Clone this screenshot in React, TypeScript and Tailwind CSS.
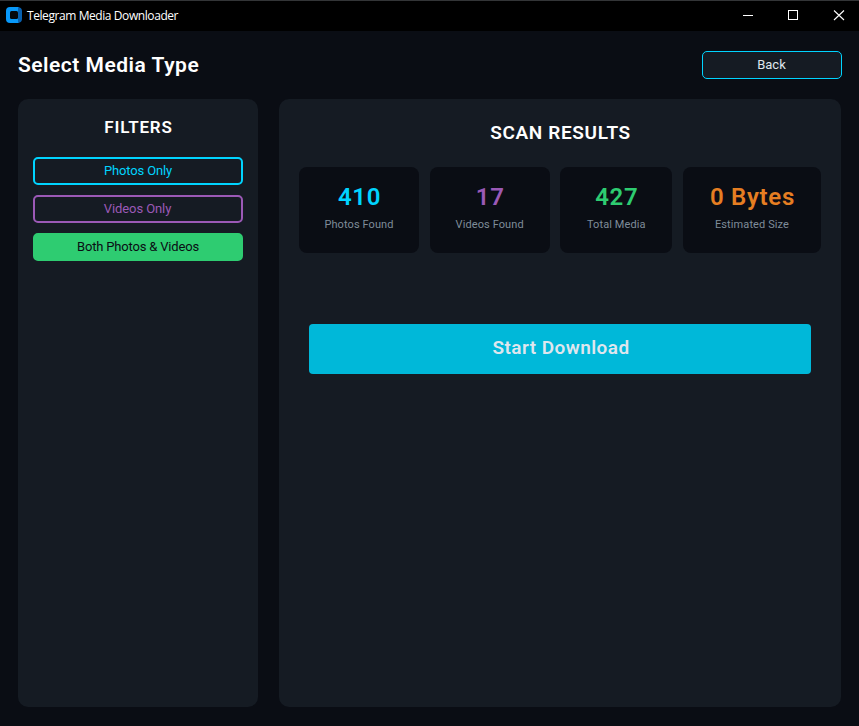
import type { ReactNode } from "react";

function TitleBar() {
  return (
    <header className="flex h-[31px] shrink-0 items-center border-t border-[#333537] bg-black pl-[6px] font-['Open_Sans',sans-serif]">
      <svg width="16" height="16" viewBox="0 0 16 16" className="mb-[2px] shrink-0">
        <path d="M4 0H13V16H4Q0 16 0 12V4Q0 0 4 0Z" fill="#0898f8" />
        <path d="M12 0Q16 0.5 16 4V12Q16 15.5 12 16V13L12 3Z" fill="#0861b0" />
        <rect x="4" y="4" width="8" height="8" rx="1.5" fill="#05080d" />
      </svg>
      <span className="ml-[5px] text-[12px] tracking-[-0.42px] text-white">Telegram Media Downloader</span>
      <svg width="120" height="30" viewBox="739 1 120 30" className="ml-auto" fill="none" stroke="#fff" shapeRendering="crispEdges">
        <path d="M743 15.5H753M788.500 10.500H797.500V19.500H788.500Z" />
        <path d="M834 10.500L844 20M844 10.500L834 20" shapeRendering="auto" strokeWidth="1.1" />
      </svg>
    </header>
  );
}

function FilterButton({ className, children }: { className: string; children: ReactNode }) {
  return (
    <button className={`flex h-7 w-full items-center justify-center rounded-[5px] border-2 pb-px text-[13px] leading-4 ${className}`}>
      {children}
    </button>
  );
}

function StatCard({ value, label, className, color }: { value: string; label: string; className: string; color: string }) {
  return (
    <div className={`flex h-[86px] flex-col items-center rounded-lg bg-[#0a0d14] pt-[15px] ${className}`}>
      <div className={`pl-px text-2xl leading-[30px] font-semibold tracking-[0.7px] ${color}`}>{value}</div>
      <div className="mt-[5px] text-[11px] leading-4 tracking-[0.1px] text-[#7f8c99]">{label}</div>
    </div>
  );
}

export default function App() {
  return (
    <div className="flex h-[726px] w-[859px] flex-col overflow-hidden bg-[#0a0d14] font-[Roboto,sans-serif]">
      <TitleBar />
      <div className="flex h-[68px] shrink-0 items-center justify-between pr-[17px] pl-[18px]">
        <h1 className="text-[21px] leading-6 font-semibold tracking-[0.5px] text-white">Select Media Type</h1>
        <button className="flex h-7 w-[140px] items-center justify-center rounded-[5px] border border-[#00d4ff] bg-[#151b23] pr-px pb-px text-[13px] leading-4 text-[#dfe6ee]">
          Back
        </button>
      </div>
      <main className="flex h-[608px] gap-[21px] pl-[18px]">
        <aside className="flex w-[240px] flex-col rounded-[10px] bg-[#151b23] px-[15px] pt-[17px]">
          <h2 className="mb-[19px] pl-px text-center text-[17px] leading-[22px] font-semibold tracking-[0.8px] text-white">FILTERS</h2>
          <div className="flex flex-col gap-2.5">
            <FilterButton className="border-[#00d4ff] tracking-[-0.14px] text-[#00d4ff]">Photos Only</FilterButton>
            <FilterButton className="border-[#9b59b6] pr-px tracking-[-0.08px] text-[#9b59b6]">Videos Only</FilterButton>
            <FilterButton className="border-[#2ecc71] bg-[#2ecc71] tracking-[-0.18px] text-[#0a0d14]">Both Photos &amp; Videos</FilterButton>
          </div>
        </aside>
        <section className="w-[562px] rounded-[10px] bg-[#151b23] px-5 pt-[22px]">
          <h2 className="mb-[22px] pl-px text-center text-[19px] leading-6 font-semibold tracking-[0.65px] text-white">SCAN RESULTS</h2>
          <div className="flex justify-between">
            <StatCard value="410" label="Photos Found" className="w-[120px]" color="text-[#00d4ff]" />
            <StatCard value="17" label="Videos Found" className="w-[120px]" color="text-[#9b59b6]" />
            <StatCard value="427" label="Total Media" className="w-[112px]" color="text-[#2ecc71]" />
            <StatCard value="0 Bytes" label="Estimated Size" className="w-[138px]" color="text-[#e67e22]" />
          </div>
          <button className="mx-2.5 mt-[71px] flex h-[50px] w-[502px] items-center justify-center rounded-[4px] bg-[#00b8d9] pb-[2px] pl-[2px] text-[19px] leading-6 font-semibold tracking-[0.45px] text-[#dfe6ee]">
            Start Download
          </button>
        </section>
      </main>
    </div>
  );
}
